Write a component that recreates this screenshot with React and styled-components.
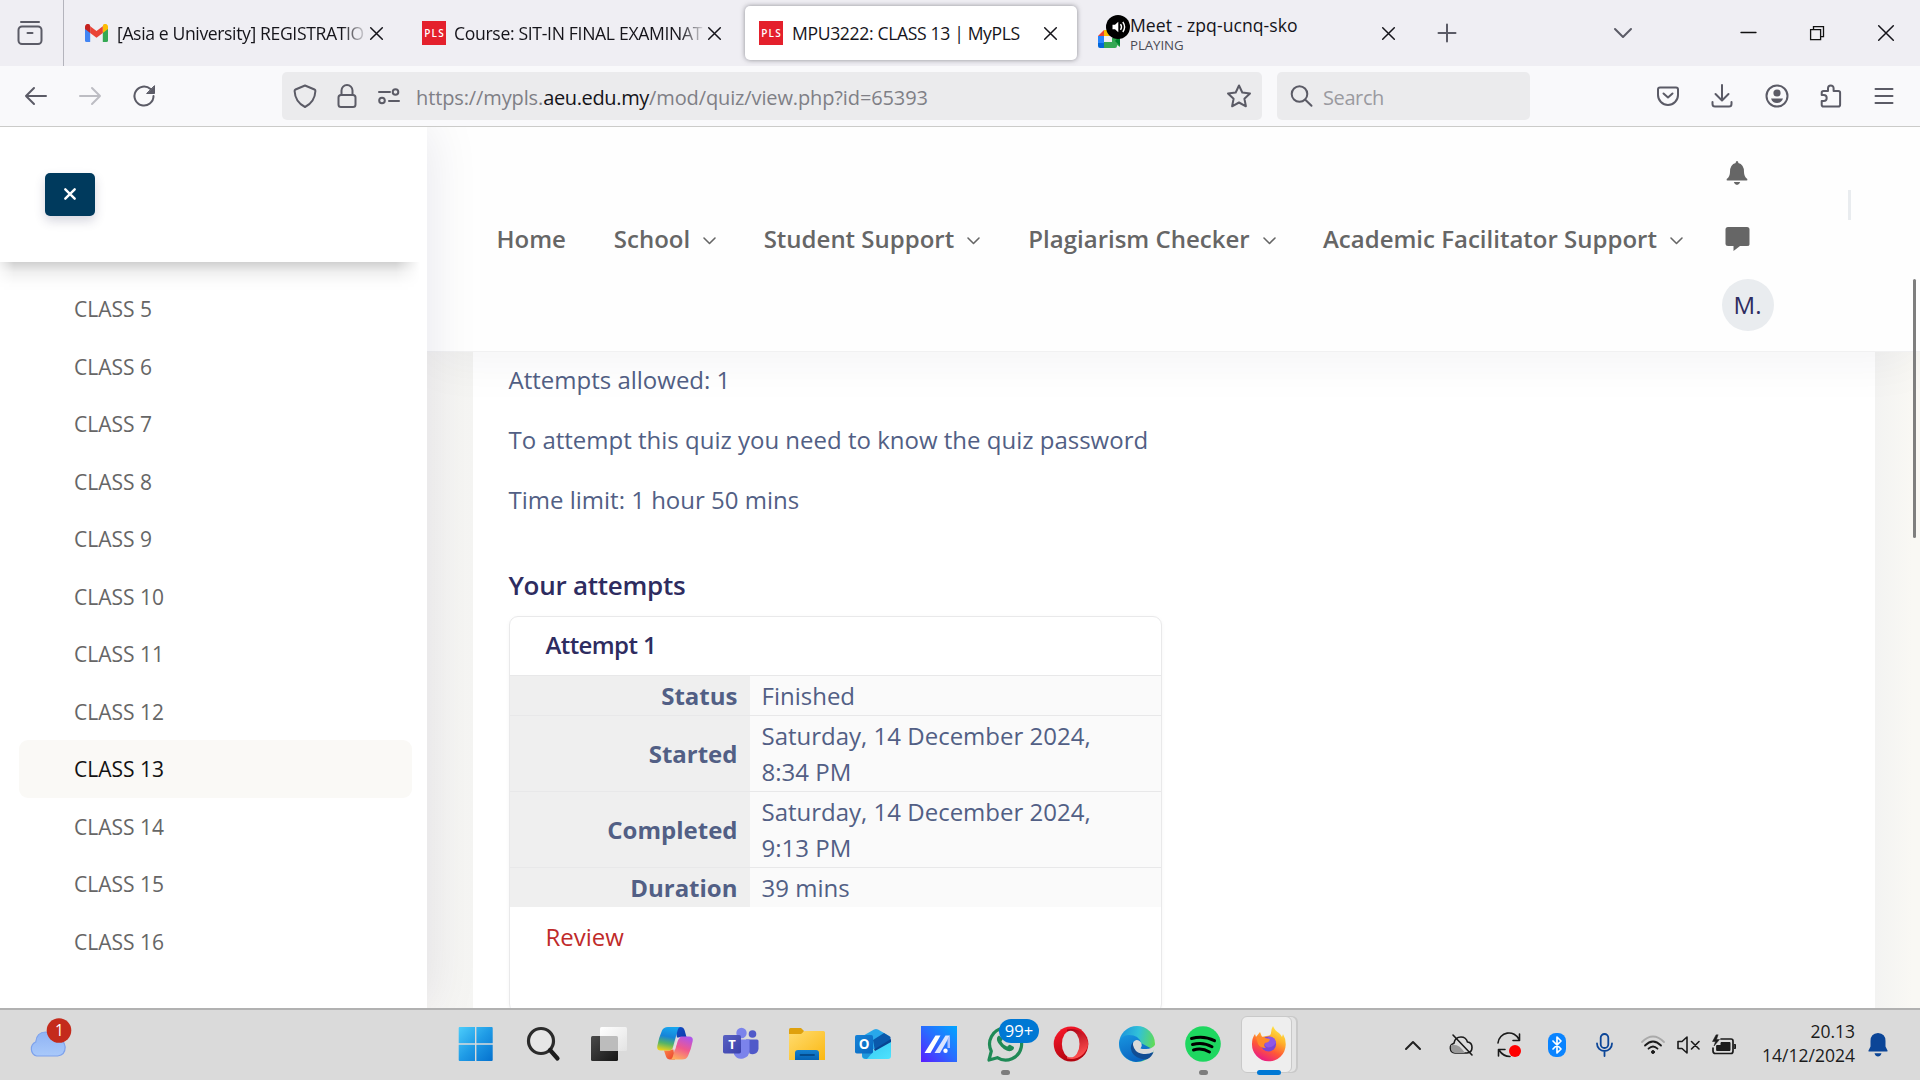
import React from "react";
import styled, { createGlobalStyle, css } from "styled-components";

const Global = createGlobalStyle`
  * { box-sizing: border-box; }
  html, body { margin: 0; padding: 0; overflow: hidden; }
  body { font-family: "Open Sans", "Noto Sans", sans-serif; background: #fff; }
`;

const Screen = styled.div`
  width: 1920px;
  height: 1080px;
  display: flex;
  flex-direction: column;
  overflow: hidden;
`;

/* ---------- browser chrome ---------- */
const TabStrip = styled.div`
  height: 66px;
  flex: none;
  display: flex;
  align-items: center;
  background: #efeef3;
  color: #15141a;
`;
const FirefoxView = styled.div`
  width: 64px;
  height: 66px;
  border-right: 1px solid #b4b4bc;
  display: flex;
  align-items: center;
  padding-left: 17px;
  margin-right: 7px;
`;
const Tab = styled.div`
  width: 332px;
  height: 54px;
  margin-right: 5px;
  padding: 0 ${(p) => p.$right ?? 20}px 0 14px;
  display: flex;
  align-items: center;
  border-radius: 5px;
  ${(p) => p.$active && css`
    background: #fff;
    box-shadow: 0 0 5px rgba(60, 60, 70, 0.55);
  `}
`;
const TabText = styled.div`
  flex: 1;
  min-width: 0;
  margin-left: ${(p) => p.$gap ?? 8}px;
  overflow: hidden;
  display: flex;
  flex-direction: column;
  ${(p) => p.$fade && css`
    margin-right: ${p.$fade}px;
    mask-image: linear-gradient(to right, #000 calc(100% - 26px), transparent);
  `}
`;
const TabTitle = styled.span`
  font-size: 17.6px;
  line-height: ${(p) => p.$lh ?? 24}px;
  white-space: nowrap;
  letter-spacing: ${(p) => p.$ls ?? -0.36}px;
`;
const TabStatus = styled.span`
  font-size: 13.3px;
  line-height: 16px;
  letter-spacing: -0.1px;
  color: #4a4a55;
`;
const PlsBox = styled.span`
  width: 24px;
  height: 24px;
  flex: none;
  background: #e4202c;
  color: #fff;
  font-size: 10px;
  font-weight: 600;
  letter-spacing: 1.2px;
  padding-left: 1px;
  display: flex;
  align-items: center;
  justify-content: center;
`;
const Spacer = styled.div` flex: 1; `;
const WindowTools = styled.div`
  display: flex;
  align-items: center;
  margin-left: ${(p) => p.$left}px;
  margin-right: ${(p) => p.$right}px;
`;

const Toolbar = styled.div`
  height: 61px;
  flex: none;
  display: flex;
  align-items: center;
  background: #f9f9fb;
  border-bottom: 1px solid #cbcbc9;
  padding: 0 26px 0 24px;
  color: #5b5b66;
`;
const NavButtons = styled.div`
  display: flex;
  gap: 30.5px;
  width: 258px;
`;
const Field = styled.div`
  width: ${(p) => p.$w}px;
  height: 48px;
  border-radius: 5px;
  background: #ebebed;
  display: flex;
  align-items: center;
  padding: 0 ${(p) => p.$right ?? 10}px 0 ${(p) => p.$left ?? 11}px;
  margin-right: 15px;
`;
const FieldIcons = styled.div`
  display: flex;
  align-items: center;
  gap: 18px;
  margin-right: 15px;
`;
const Url = styled.span`
  flex: 1;
  font-size: 20px;
  letter-spacing: ${(p) => p.$ls ?? -0.12}px;
  margin-left: ${(p) => p.$left ?? 0}px;
  padding-top: 2px;
  color: ${(p) => p.$color ?? "#7f7f86"};
  white-space: nowrap;
  b { font-weight: 400; color: #15141a; letter-spacing: -0.35px; }
`;
const ToolIcons = styled.div`
  display: flex;
  align-items: center;
  gap: 31.7px;
`;

/* ---------- page ---------- */
const Page = styled.div`
  flex: 1;
  min-height: 0;
  display: flex;
  overflow: hidden;
  position: relative;
  background: #fff;
`;
const Sidebar = styled.aside`
  width: 427px;
  flex: none;
  background: #fff;
  position: relative;
  z-index: 3;
  box-shadow: 0 0 50px rgba(8, 21, 66, 0.1);
`;
const SideHead = styled.div`
  height: 135px;
  padding: 46px 0 0 45px;
  position: relative;
  &::after {
    content: "";
    position: absolute;
    left: 0;
    top: 135px;
    width: 427px;
    height: 30px;
    background: linear-gradient(rgba(0,0,0,0.18), rgba(0,0,0,0.06) 35%, rgba(0,0,0,0.012) 70%, transparent);
    mask-image: linear-gradient(to right, rgba(0,0,0,0.3), #000 14px, #000 396px, transparent 420px);
  }
`;
const CloseButton = styled.button`
  width: 50px;
  height: 43px;
  border: 0;
  border-radius: 5px;
  background: #003a5d;
  display: flex;
  align-items: center;
  justify-content: center;
  padding: 0 0 1px;
  box-shadow: 0 5px 11px rgba(50, 50, 93, 0.2);
`;
const ClassList = styled.ul`
  list-style: none;
  margin: 0;
  padding: 18px 15px 0 19px;
`;
const ClassItem = styled.li`
  height: 57.5px;
  padding: 1.2px 0 0 55px;
  display: flex;
  align-items: center;
  border-radius: 9px;
  font-size: 21px;
  color: ${(p) => (p.$active ? "#121212" : "#666")};
  background: ${(p) => (p.$active ? "#faf9f6" : "transparent")};
`;
const Main = styled.main`
  flex: 1;
  min-width: 0;
  display: flex;
  flex-direction: column;
`;
const Header = styled.header`
  height: 225px;
  flex: none;
  display: flex;
  align-items: center;
  padding: 0 69.5px;
  background: #fefefe;
  border-bottom: 1px solid #f1f1f2;
  position: relative;
  z-index: 2;
  box-shadow: 0 8px 50px rgba(8, 21, 66, 0.05);
`;
const MenuItem = styled.a`
  display: flex;
  align-items: center;
  font-size: 24px;
  font-weight: 600;
  color: #666;
  white-space: nowrap;
  width: ${(p) => p.$w}px;
  padding-bottom: 2px;
  svg { margin: 6px 0 0 13px; }
`;
const UserTools = styled.div`
  display: flex;
  flex-direction: column;
  width: 52px;
  svg { margin-left: 3px; }
`;
const ToolSlot = styled.div`
  height: 66px;
  display: flex;
  align-items: center;
`;
const Avatar = styled.div`
  width: 52px;
  height: 52px;
  border-radius: 50%;
  background: #e9ecef;
  color: #2e2c60;
  font-size: 24px;
  padding-bottom: 1px;
  display: flex;
  align-items: center;
  justify-content: center;
`;
const Divider = styled.div`
  width: 3px;
  height: 30px;
  background: #e9ecef;
  margin: 0 0 68px 74px;
`;
const Body = styled.div`
  flex: 1;
  min-height: 0;
  display: flex;
  padding: 0 45px 0 46px;
  background: linear-gradient(to right, #f7f6f4, #f5f5f3 50px, #f3f3f2 1448px, #f9f8f4 1485px);
`;
const Sheet = styled.section`
  flex: 1;
  background: #fff;
  padding: 10px 36px 0;
  color: #525f85;
`;
const Info = styled.p`
  margin: 0 0 24px -0.5px;
  font-size: 24px;
  line-height: 36px;
`;
const Heading = styled.h3`
  margin: 49px 0 13px -0.5px;
  font-size: 26px;
  line-height: 36px;
  font-weight: 600;
  letter-spacing: -0.27px;
  color: #2e2c60;
`;
const Card = styled.div`
  width: 653px;
  height: 397px;
  border: 1px solid #e9e9ea;
  border-radius: 9px;
  box-shadow: 0 1px 4px rgba(0, 0, 0, 0.04);
`;
const CardTitle = styled.div`
  height: 58px;
  padding: 0 0 3px 35.5px;
  display: flex;
  align-items: center;
  font-size: 24px;
  font-weight: 600;
  letter-spacing: -0.6px;
  color: #2e2c60;
`;
const Row = styled.div`
  display: flex;
  font-size: 24px;
  line-height: 36px;
  border-top: 1px solid #e8e8e9;
`;
const Label = styled.div`
  width: 240px;
  padding: 2px 12.5px 1px;
  background: #efefef;
  font-weight: 700;
  display: flex;
  align-items: center;
  justify-content: flex-end;
`;
const Value = styled.div`
  flex: 1;
  padding: 2px 11.5px 1px;
  background: #fafafa;
  white-space: pre-line;
`;
const Review = styled.a`
  display: block;
  padding: 12px 35.5px;
  font-size: 24px;
  line-height: 36px;
  color: #bf2a2a;
`;
const Scrollbar = styled.div`
  position: absolute;
  right: 4px;
  top: 152px;
  width: 3px;
  height: 259px;
  background: #7f7f7f;
  border-radius: 2px;
  z-index: 4;
`;

/* ---------- taskbar ---------- */
const Taskbar = styled.footer`
  height: 72px;
  flex: none;
  display: flex;
  background: #dadada;
  border-top: 2px solid #b1b1b1;
`;
const Weather = styled.div`
  width: 444px;
  padding: 8px 0 0 29px;
`;
const AppSlot = styled.div`
  width: 66px;
  height: 70px;
  position: relative;
  display: flex;
  justify-content: center;
  padding-top: 16px;
`;
const ActiveTile = styled.div`
  position: absolute;
  left: 5px;
  top: 6px;
  width: 51px;
  height: 57px;
  border-radius: 6px;
  background: #eeeeee;
  border: 1px solid #c9c9c9;
  box-shadow: 5px 0 0 -1px #e4e4e4, 6px 0 0 0 #c9c9c9;
`;
const Running = styled.div`
  position: absolute;
  bottom: 5px;
  left: ${(p) => (p.$wide ? 21 : 29)}px;
  width: ${(p) => (p.$wide ? 24 : 9)}px;
  height: 5px;
  border-radius: 3px;
  background: ${(p) => (p.$wide ? "#0078d4" : "#7d7d7d")};
`;
const Badge = styled.div`
  position: absolute;
  left: 27px;
  top: 9px;
  width: 40px;
  height: 24px;
  border-radius: 12px;
  background: #0078d4;
  color: #fff;
  font-size: 16.5px;
  padding-bottom: 1px;
  display: flex;
  align-items: center;
  justify-content: center;
`;
const Tray = styled.div`
  display: flex;
  align-items: center;
  padding: 0 32px 1px 0;
`;
const TraySlot = styled.div`
  width: ${(p) => p.$w}px;
  display: flex;
`;
const Clock = styled.div`
  width: 102px;
  text-align: right;
  font-size: 17.5px;
  line-height: 24px;
  color: #1b1b1b;
  margin-right: 13px;
  padding-bottom: 3px;
`;

/* ---------- drawings ---------- */
const Ico = ({ w, h, children, sw = 2, c = "currentColor", ...r }) => (
  <svg width={w} height={h} viewBox={`0 0 ${w} ${h}`} fill="none" stroke={c} strokeWidth={sw}
    strokeLinecap="round" strokeLinejoin="round" overflow="visible" {...r}>
    {children}
  </svg>
);
const Cross = ({ s = 13 }) => (
  <Ico w={s} h={s} sw={1.5} c="#15141a"><path d={`M.7.7L${s - 0.7} ${s - 0.7}M${s - 0.7}.7L.7 ${s - 0.7}`} /></Ico>
);
const Gmail = () => (
  <svg width="23" height="18" viewBox="0 0 23 18">
    <path d="M0 3v13.5Q0 18 1.5 18H5.2V7z" fill="#4285f4" />
    <path d="M23 3v13.5Q23 18 21.500 18H17.8V7z" fill="#34a853" />
    <path d="M17.8 2.200V9L23 5V2.800C23 .3 20.200-.9 18.300.6z" fill="#fbbc04" />
    <path d="M5.200 9V2.200L11.500 7l6.300-4.800V9l-6.300 4.800z" fill="#ea4335" />
    <path d="M0 2.800V5l5.200 4V2.200L4.700.6C2.800-.9 0 .3 0 2.800z" fill="#c5221f" />
  </svg>
);
const Meet = () => (
  <svg width="35" height="44" viewBox="0 0 35 44">
    <path d="M2 25l6-6v6z" fill="#ea4335" />
    <path d="M2 25h6v7H2z" fill="#2684fc" />
    <path d="M2 32h6v5H4q-2 0-2-2z" fill="#0066da" />
    <path d="M8 19h11q2 0 2 2v4H8z" fill="#ffba00" />
    <path d="M8 31h8v-4h5l3-3v12l-3-2v1q0 2-2 2H8z" fill="#34a853" />
    <path d="M19 30l5-6v11z" fill="#00832d" />
    <circle cx="22" cy="16" r="12" fill="#000" />
    <path d="M16.500 13.700h2.500l3.300-3v10.600l-3.300-3h-2.500z" fill="#fff" />
    <path d="M24.500 13.200q2 2.800 0 5.600M26.800 11q3.600 5 0 10" stroke="#fff" strokeWidth="1.400" fill="none" />
  </svg>
);
const Chevron = () => <Ico w={13} h={8} sw={1.6}><path d="M1 1l5.500 5.500L12 1" /></Ico>;

const T = ({ children }) => (
  <svg width="36" height="36" viewBox="0 0 36 36" overflow="visible">{children}</svg>
);
const AppArt = styled.div`
  position: relative;
  height: 36px;
`;
const Lg = ({ id, a, b, m, x2 = 1, y2 = 1 }) => (
  <linearGradient id={id} x1="0" y1="0" x2={x2} y2={y2}>
    <stop offset="0" stopColor={a} />{m && <stop offset=".5" stopColor={m} />}<stop offset="1" stopColor={b} />
  </linearGradient>
);

const apps = [
  { k: "win", art: <T><defs><Lg id="w" a="#4ccdfb" m="#1f9be6" b="#0571ce" /></defs>
    <path transform="translate(-1.300 0)" d="M2 1H17.300V17.300H1V2q0-1 1-1zM18.700 1H34q1 0 1 1V17.300H18.700zM1 18.700H17.300V35H2q-1 0-1-1zM18.700 18.700H35V34q0 1-1 1H18.700z" fill="url(#w)" /></T> },
  { k: "search", art: <T><circle cx="16" cy="15" r="12.500" fill="#e6e6e6" stroke="#2b2b2b" strokeWidth="3.200" /><path d="M25 24l7.500 8.500" stroke="#1c1c1c" strokeWidth="4.200" strokeLinecap="round" /></T> },
  { k: "view", art: <T><defs><Lg id="v" a="#4a4a4a" b="#161616" /><Lg id="v2" a="#fff" b="#e3e3e3" /></defs>
    <rect x="0" y="10" width="27" height="25" rx="1.500" fill="url(#v)" /><rect x="9" y="1" width="27" height="24" rx="1.500" fill="url(#v2)" /><path d="M9 10h16.500q1.500 0 1.500 1.500V25H10q-1 0-1-1z" fill="#bcbcbc" /></T> },
  { k: "copilot", art: <T><defs>
      <linearGradient id="c1" x1=".5" y1="0" x2=".3" y2="1"><stop offset="0" stopColor="#18a5ee" /><stop offset=".4" stopColor="#1684d8" /><stop offset=".7" stopColor="#55b467" /><stop offset="1" stopColor="#e9d21b" /></linearGradient>
      <linearGradient id="c2" x1=".7" y1="0" x2=".3" y2="1"><stop offset="0" stopColor="#b054ea" /><stop offset=".5" stopColor="#f0598c" /><stop offset="1" stopColor="#ffae5c" /></linearGradient>
      <Lg id="c3" a="#1450c8" b="#0c38a8" /><Lg id="c4" a="#ff8a4a" b="#e8402c" /></defs>
    <path d="M18 1h5.500q3 0 4 3l2 7h-5q-3 0-4 3z" fill="url(#c3)" />
    <path d="M18 33.500h-5q-3 0-4-3L7 24.500h5q3 0 4-3z" fill="url(#c4)" />
    <path d="M11 1h13q-2.500 0-3.300 3L16 21q-1 3.500-4 3.500H4Q-.5 24.500.3 20 2 11 5 4.500 6.500 1 11 1z" fill="url(#c1)" />
    <path d="M25 33.500H12.500q2.500 0 3.300-3L20.500 14q1-3.500 4-3.500H32q4.500 0 3.700 4.500-1.700 9-4.700 15-1.500 3.500-6 3.500z" fill="url(#c2)" />
    <path d="M20 11.500h3.500q-2 .8-2.800 3.500l-2.500 8.500h-3.700q2-.5 2.700-3.200z" fill="#e4e0e2" /></T> },
  { k: "teams", art: <T><defs><Lg id="t" a="#5a62c3" b="#3940ab" /></defs>
    <circle cx="29.500" cy="8" r="3.800" fill="#5059c9" /><path d="M23 13.500h11q1.500 0 1.500 1.500v7.500a6 6 0 01-9 5z" fill="#5059c9" />
    <circle cx="18.500" cy="7" r="5.200" fill="#7b83eb" /><path d="M11 13.500h15.500v11a8.300 8.300 0 01-15.500 4z" fill="#7b83eb" />
    <rect x="0" y="9" width="18" height="18.500" rx="1.800" fill="url(#t)" /><text x="9" y="23" fontSize="13" fontWeight="700" fill="#fff" textAnchor="middle">T</text></T> },
  { k: "files", art: <T><defs><Lg id="f" a="#ffdc70" b="#fbb812" /><Lg id="f2" a="#1480cf" b="#0563b5" x2={0} /></defs>
    <path d="M0 3.500Q0 2 1.500 2H12l3 3-3 6H0z" fill="#dfa10d" /><path d="M0 8h12l3.500-3H34.500Q36 5 36 6.500V34H0z" fill="url(#f)" />
    <path d="M6 34V27q0-3 3-3H27q3 0 3 3v7z" fill="url(#f2)" /><path d="M11.500 29h13.500" stroke="#044c8d" strokeWidth="1.800" strokeLinecap="round" /></T> },
  { k: "outlook", art: <T><defs><Lg id="o" a="#1683d8" b="#0867be" /><Lg id="o2" a="#35c5f3" b="#4ee3fd" /></defs>
    <path d="M6 11L19 3.500q2-1 4 0l12 7-16 13H6z" fill="#28a8ea" /><path d="M18 14L29 7l6.500 4v5L20 25z" fill="#0a59ab" /><path d="M19 23.500L36 13v4L21 27z" fill="#084391" />
    <path d="M7 22h8l5 3 16-9v14q0 3-3 3H10q-3 0-3-3z" fill="url(#o2)" /><path d="M7 22l10 5-5 6q-5 0-5-4z" fill="#1e97dc" />
    <rect x="0" y="9" width="18" height="18.500" rx="1.800" fill="url(#o)" /><text x="9" y="23" fontSize="13.500" fontWeight="700" fill="#fff" textAnchor="middle">O</text></T> },
  { k: "asus", art: <T><defs><linearGradient id="a" x1="0" y1="1" x2="1" y2="0"><stop offset="0" stopColor="#5a1cff" /><stop offset=".5" stopColor="#2a6bff" /><stop offset="1" stopColor="#00a6ff" /></linearGradient></defs>
    <path d="M0 0H36V36H0z" fill="url(#a)" /><path d="M3.500 27L14.500 9.500h5L9.500 27z" fill="#fff" /><path d="M13.500 27L24.500 9.500h4.500L19 27z" fill="#dbe4ff" /><path d="M26.500 13l2.500-3.500v12.500h-2.500z" fill="#a9c0ff" /><circle cx="24.500" cy="24.700" r="2.200" fill="#fff" /></T> },
  { k: "wa", run: true, badge: true, art: <T>
    <path d="M2 34l2.300-8.800A16 16 0 1110.300 31.700z" fill="none" stroke="#1f8a56" strokeWidth="3.200" strokeLinejoin="round" />
    <path d="M12 9.500c-3 1.500-2.500 5.500 0 8.500 3 4 7.500 8 12 7 3-1 3.500-3.500 2.500-4.300l-3.500-1.900c-1-.5-2 1.800-3 1.600-2.500-1-4.500-3-5.500-5 0-1 1.500-1.500 1-2.700z" fill="#1f8a56" /></T> },
  { k: "opera", art: <T><defs><Lg id="op" a="#ff1b2d" b="#b1040f" x2={0.4} /><Lg id="op2" a="#a70014" b="#ff4f4f" x2={0.3} /></defs>
    <ellipse cx="18" cy="18" rx="17.300" ry="17.500" fill="url(#op)" /><path d="M14 3.500A17.400 17.400 0 0135.300 18 17.400 17.400 0 0114 32.500z" fill="url(#op2)" /><ellipse cx="17.700" cy="18" rx="8.800" ry="13.300" fill="#dcdcdc" /></T> },
  { k: "edge", art: <T><defs><linearGradient id="e" x1="0" y1=".3" x2="1" y2=".5"><stop offset="0" stopColor="#1c93dc" /><stop offset=".5" stopColor="#31c1d9" /><stop offset="1" stopColor="#62dc52" /></linearGradient><Lg id="e2" a="#1896e0" b="#0a63c0" x2={0.4} /></defs>
    <circle cx="18" cy="18" r="18" fill="url(#e)" />
    <path d="M0 17Q2 9 10 9q10 0 12 8l13 7Q28 36 17 36 2 34 0 17z" fill="url(#e2)" />
    <path d="M14 16q-5 6 1 13 6 5 13 4.300Q33 31 34.500 26q-6 3-12 1-8-3-8.500-11z" fill="#114d94" />
    <path d="M21.500 22.500q2-2 1-5-1.500-3.500-5-3.500-4 1-3.500 5 1.500 7 8 8.500 7 1.500 12-1.500l2.500-4-.5-3q-3 4-9 4-4 0-5.500-.5z" fill="#dadada" /></T> },
  { k: "spotify", run: true, art: <T><circle cx="18" cy="18" r="17.800" fill="#1ed760" /><path d="M6.500 12.500q12-3.500 23 2.200M7.500 18.500q10.500-3 19.500 2.200M8.500 24q8.500-2.500 16 2" stroke="#000" strokeWidth="3" fill="none" strokeLinecap="round" /></T> },
  { k: "ff", active: true, art: <T><defs>
      <linearGradient id="x" x1=".8" y1="0" x2=".3" y2="1"><stop offset="0" stopColor="#fff04a" /><stop offset=".35" stopColor="#ffb02a" /><stop offset=".65" stopColor="#ff5a36" /><stop offset="1" stopColor="#e8178a" /></linearGradient></defs>
    <path d="M22 0q2 5 6 7 2 2 3 4l1-3q3 5 2.700 11A16.800 16.800 0 011 18Q1 12 4 8l1 3 4-5 2 5 4-1q5 0 5-3 0-4 2-7z" fill="url(#x)" />
    <circle cx="17.500" cy="18" r="7.600" fill="#7a45d8" /><path d="M17.500 10.400q6 0 7.600 6-3 5-8 5-4-1-3-4z" fill="#8f57e6" />
    <path d="M5 11q5-2 9 1 3 0 5 1.500-1 3-5 3.500-2 3 1 5-6 0-8-4z" fill="#ff8a2a" /></T> },
];

const classes = Array.from({ length: 12 }, (_, i) => i + 5);

export default function App() {
  return (
    <>
      <Global />
      <Screen>
        <TabStrip>
          <FirefoxView>
            <Ico w={26} h={24} c="#5b5b66"><path d="M4 1h18" /><rect x="1.500" y="5.500" width="23" height="17.500" rx="3.500" /><path d="M10.500 12h5" /></Ico>
          </FirefoxView>
          <Tab>
            <Gmail />
            <TabText $fade={2} $gap={9}><TabTitle $ls={-0.38}>[Asia e University] REGISTRATIO</TabTitle></TabText>
            <Cross />
          </Tab>
          <Tab $right={19}>
            <PlsBox>PLS</PlsBox>
            <TabText $fade={2}><TabTitle $ls={-0.33}>Course: SIT-IN FINAL EXAMINAT</TabTitle></TabText>
            <Cross />
          </Tab>
          <Tab $active $right={20}>
            <PlsBox>PLS</PlsBox>
            <TabText $gap={9}><TabTitle>MPU3222: CLASS 13 | MyPLS</TabTitle></TabText>
            <Cross />
          </Tab>
          <Tab $right={19}>
            <Meet />
            <TabText $gap={-1}><TabTitle $lh={23} $ls={0.05}>Meet - zpq-ucnq-sko</TabTitle><TabStatus>PLAYING</TabStatus></TabText>
            <Cross />
          </Tab>
          <WindowTools $left={18.5}><Ico w={18} h={18} c="#5b5b66"><path d="M9 .5v17M.5 9h17" /></Ico></WindowTools>
          <Spacer />
          <WindowTools><Ico w={18} h={10} c="#5b5b66"><path d="M1 1l8 8 8-8" /></Ico></WindowTools>
          <WindowTools $left={109}><Ico w={15} h={2} c="#111" sw={1.300}><path d="M0 .5h15" /></Ico></WindowTools>
          <WindowTools $left={54}><Ico w={14} h={14} c="#111" sw={1.300}><path d="M.6 3.600h10v10h-10zM3.500 3.500V.6h10v10h-3" strokeLinejoin="miter" /></Ico></WindowTools>
          <WindowTools $left={54} $right={26}><Cross s={16} /></WindowTools>
        </TabStrip>

        <Toolbar>
          <NavButtons>
            <Ico w={24} h={22}><path d="M22 11H2M10 3l-8 8 8 8" /></Ico>
            <Ico w={24} h={22} c="#bdbdc3"><path d="M1 11h20M13 3l8 8-8 8" /></Ico>
            <Ico w={24} h={22}><path d="M20.500 11a9.500 9.500 0 11-3-6.900" /><path d="M21.500 1v7.500H14z" fill="currentColor" strokeWidth="1" /></Ico>
          </NavButtons>
          <Field $w={980}>
            <FieldIcons>
              <Ico w={24} h={24}><path d="M12 1.500l9.500 4q1 .4.900 1.500-.5 11-10.400 16Q2.100 18 1.600 7q0-1.100.9-1.500z" /></Ico>
              <Ico w={24} h={24}><rect x="3.500" y="11" width="17" height="12" rx="2.500" /><path d="M6.500 11V6.500a5.500 5.500 0 0111 0V11" /></Ico>
              <Ico w={24} h={16}><path d="M2 4h11M12 13h10" /><circle cx="18.500" cy="4" r="2.800" /><circle cx="5" cy="12.500" r="2.800" /></Ico>
            </FieldIcons>
            <Url>https://mypls.<b>aeu.edu.my</b>/mod/quiz/view.php?id=65393</Url>
            <Ico w={26} h={24}><path d="M13 1.500l3.300 7 7.700 1-5.600 5.200 1.500 7.600-6.900-3.800-6.900 3.800 1.500-7.600L2 9.500l7.700-1z" /></Ico>
          </Field>
          <Field $w={253} $left={13}>
            <Ico w={24} h={24}><circle cx="9.500" cy="10" r="7.800" /><path d="M15.300 15.800l6.200 6" /></Ico>
            <Url $left={9} $color="#9a9aa0" $ls={-0.4}>Search</Url>
          </Field>
          <Spacer />
          <ToolIcons>
            <Ico w={22} h={20}><path d="M3 1.500h16q2 0 2 2V9a10 10 0 01-20 0V3.500q0-2 2-2z" /><path d="M6.500 7.500l4.500 4 4.500-4" /></Ico>
            <Ico w={22} h={24}><path d="M11 1v15M4.500 10l6.500 6.500 6.500-6.500M1.500 18v2q0 2.500 2.500 2.500h14q2.500 0 2.500-2.500v-2" /></Ico>
            <Ico w={24} h={24}><circle cx="12" cy="12" r="10.500" /><circle cx="12" cy="9" r="3.600" fill="currentColor" stroke="none" /><path d="M6 14.500h12q-1.500 4.500-6 4.500t-6-4.500z" fill="currentColor" stroke="none" /></Ico>
            <Ico w={22} h={24}><path d="M3.500 22.500q-1.800 0-1.800-1.800V17h2a3 3 0 000-6h-2V8.800Q1.700 7 3.500 7H8V4.300a2.800 2.800 0 015.600 0V7h4.700q1.800 0 1.800 1.800v11.900q0 1.800-1.800 1.800z" /></Ico>
            <Ico w={20} h={18}><path d="M1.500 2h17M1.500 9h17M1.500 16h17" /></Ico>
          </ToolIcons>
        </Toolbar>

        <Page>
          <Sidebar>
            <SideHead>
              <CloseButton><Ico w={12} h={12} c="#fff" sw={2.400}><path d="M1.300 1.300l9.400 9.400M10.700 1.300l-9.400 9.400" /></Ico></CloseButton>
            </SideHead>
            <ClassList>
              {classes.map((n) => <ClassItem key={n} $active={n === 13}>CLASS {n}</ClassItem>)}
            </ClassList>
          </Sidebar>
          <Main>
            <Header>
              <MenuItem $w={117.5}>Home</MenuItem>
              <MenuItem $w={150}>School<Chevron /></MenuItem>
              <MenuItem $w={265}>Student Support<Chevron /></MenuItem>
              <MenuItem $w={295}>Plagiarism Checker<Chevron /></MenuItem>
              <MenuItem $w={399}>Academic Facilitator Support<Chevron /></MenuItem>
              <UserTools>
                <ToolSlot>
                  <svg width="24" height="26" viewBox="0 0 24 26"><path d="M12 1q1.300 0 1.300 1.500v.6Q19 4.500 19 12q0 4.500 3.300 7 .5 1.500-.8 1.500h-19Q1.200 20.500 1.700 19 5 16.500 5 12q0-7.500 5.700-8.900v-.6Q10.700 1 12 1zM8.800 22h6.400q-1 3-3.200 3t-3.200-3z" fill="#666" /></svg>
                </ToolSlot>
                <ToolSlot>
                  <svg width="25" height="26" viewBox="0 0 25 26"><path d="M3 1h19q2.500 0 2.500 2.500v15Q24.500 20 22 20H15l-6.500 5V20H3Q.5 20 .5 18V3.500Q.5 1 3 1z" fill="#666" /></svg>
                </ToolSlot>
                <ToolSlot><Avatar>M.</Avatar></ToolSlot>
              </UserTools>
              <Divider />
            </Header>
            <Body>
              <Sheet>
                <Info>Attempts allowed: 1</Info>
                <Info>To attempt this quiz you need to know the quiz password</Info>
                <Info>Time limit: 1 hour 50 mins</Info>
                <Heading>Your attempts</Heading>
                <Card>
                  <CardTitle>Attempt 1</CardTitle>
                  <Row><Label>Status</Label><Value>Finished</Value></Row>
                  <Row><Label>Started</Label><Value>{"Saturday, 14 December 2024,\n8:34 PM"}</Value></Row>
                  <Row><Label>Completed</Label><Value>{"Saturday, 14 December 2024,\n9:13 PM"}</Value></Row>
                  <Row><Label>Duration</Label><Value>39 mins</Value></Row>
                  <Review>Review</Review>
                </Card>
              </Sheet>
            </Body>
          </Main>
          <Scrollbar />
        </Page>

        <Taskbar>
          <Weather>
            <svg width="44" height="42" viewBox="0 0 44 42">
              <defs><Lg id="cl" a="#8fb3f4" b="#a9c9fa" x2={0} /></defs>
              <path transform="translate(-1.300 0)" d="M9 38a7.500 7.500 0 01-1-14q1-10 10-10 7 0 10 7 8-1 9.500 8 0 8-7.500 9z" fill="url(#cl)" stroke="#7ea2ec" strokeWidth="1.200" />
              <circle cx="30" cy="12.500" r="12.300" fill="#c42b1c" /><text x="30.500" y="18" fontSize="15.500" fill="#fff" textAnchor="middle">1</text>
            </svg>
          </Weather>
          {apps.map((a) => (
            <AppSlot key={a.k}>
              {a.active && <ActiveTile />}
              <AppArt>{a.art}</AppArt>
              {a.badge && <Badge>99+</Badge>}
              {(a.run || a.active) && <Running $wide={a.active} />}
            </AppSlot>
          ))}
          <Spacer />
          <Tray>
            <TraySlot $w={44}><Ico w={16} h={10} c="#222"><path d="M1 9l7-7 7 7" /></Ico></TraySlot>
            <TraySlot $w={48}><Ico w={24} h={20} c="#1b1b1b" sw={1.600}><path d="M6 18a5 5 0 01-1-9.800Q6 2 12 2q5 0 6.500 5 4.500.5 4.500 5.500 0 5-5 5.500z" fill="#ddd" /><path d="M2 10q8-2 14 8H6q-5-1-4-8z" fill="#999" stroke="none" /><path d="M4 0l19 20" /></Ico></TraySlot>
            <TraySlot $w={51}><Ico w={24} h={24} c="#1b1b1b" sw={1.600}><path d="M1 10A11 11 0 0122 6.500M22.500 1v6.500H16M1.500 23v-6.500H8M2 17q4 6.500 11 6.500" /><circle cx="18" cy="18" r="6" fill="#f00" stroke="none" /></Ico></TraySlot>
            <TraySlot $w={48}><Ico w={18} h={24} c="#fff" sw={1.700}><rect width="18" height="24" rx="8" fill="#0a84ff" stroke="none" /><path d="M5 8l8 8-4 4V4l4 4-8 8" /></Ico></TraySlot>
            <TraySlot $w={45}><Ico w={17} h={24} c="#0b4597" sw={1.800}><rect x="4.700" y="1" width="7.600" height="14" rx="3.800" /><path d="M1 10.500a7.500 7.500 0 0015 0M8.500 18.500V23" /></Ico></TraySlot>
            <TraySlot $w={36}><Ico w={24} h={20} c="#1b1b1b" sw={1.800}><path d="M1 7q11-11 22 0" stroke="#aaa" /><path d="M4 10.500q8-8 16 0M7.500 13.700q4.500-4.500 9 0" /><circle cx="12" cy="17" r="1.500" fill="#1b1b1b" stroke="#1b1b1b" strokeWidth="1" /></Ico></TraySlot>
            <TraySlot $w={35}><Ico w={24} h={18} c="#1b1b1b" sw={1.600}><path d="M1 5.500h4l5-4.500v16l-5-4.500H1zM14.500 5.500l7.500 7.500M22 5.500L14.500 13" /></Ico></TraySlot>
            <TraySlot $w={41}><Ico w={24} h={20} c="#1b1b1b" sw={1.700}><path d="M9 4h10q2 0 2 2v10q0 2.500-2 2.500H3.500q-2.500 0-2.500-2.500v-3" /><path d="M5 10.500h4V7.500h9v8H5z" fill="#1b1b1b" strokeWidth="1" /><path d="M22.500 9.500h1v4h-1z" fill="#1b1b1b" strokeWidth="1" /><path d="M4 0L.5 6.500h3L2 11l5.500-6.500H4.500L6 0z" fill="#1b1b1b" strokeWidth=".5" /></Ico></TraySlot>
            <Clock>20.13<br />14/12/2024</Clock>
            <svg width="20" height="24" viewBox="0 0 20 24"><path d="M10 0q7.500.5 7.500 8v5.500l2 4q.5 1-.5 1H1q-1 0-.5-1l2-4V8Q2.500.5 10 0zM6.500 20.200h7Q12.500 23.500 10 23.500t-3.500-3.300z" fill="#0b4597" /></svg>
          </Tray>
        </Taskbar>
      </Screen>
    </>
  );
}
